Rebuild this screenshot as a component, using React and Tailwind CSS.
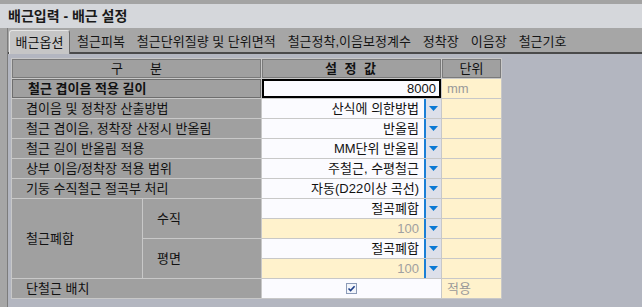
import React from "react";

const FONT = "font-['Liberation_Sans','Noto_Sans_CJK_KR',sans-serif]";

const tabs = ["철근피복", "철근단위질량 및 단위면적", "철근정착,이음보정계수", "정착장", "이음장", "철근기호"];

const DropBtn = () => (
  <div className="w-[17px] h-full shrink-0 border-l-2 border-[#1a7fd6] bg-[#dde0ea] flex items-center justify-center">
    <svg width="9" height="5" viewBox="0 0 9 5">
      <path d="M0 0H9L4.5 5Z" fill="#0a78d4" />
    </svg>
  </div>
);

const Label = ({ children, className = "" }) => (
  <div className={`bg-[#a0a0a0] flex items-center pl-[14px] text-[13px] leading-none text-[#111] ${className}`}>
    {children}
  </div>
);

const Select = ({ value, muted }) => (
  <div className={`flex items-stretch ${muted ? "bg-[#fff2cc]" : "bg-[#fbfbff]"}`}>
    <div className={`flex-1 flex items-center justify-end pr-[5px] text-[13px] leading-none ${muted ? "text-[#a0a0a0]" : "text-[#111]"}`}>
      {value}
    </div>
    <DropBtn />
  </div>
);

const Unit = ({ children }) => (
  <div className="bg-[#fff2cc] flex items-center pl-[5px] text-[13px] leading-none text-[#999]">{children}</div>
);

export default function App() {
  return (
    <div className={`${FONT} w-[642px] h-[307px] overflow-hidden bg-[#a6a6a6] flex flex-col`}>
      <div className="h-[4px] bg-[#a3a3a3]" />
      <div className="h-[24px] bg-[#d5d7db] flex items-center pl-[8px] text-[14px] font-bold text-[#1a1a1a] leading-none">
        배근입력 - 배근 설정
      </div>
      <div className="flex-1 flex">
        <div className="w-[8px] border-r border-[#7c7c7c] bg-[#a6a6a6]" />
        <div className="flex-1 flex flex-col">
          <div className="h-[26px] flex items-end border-b-2 border-[#4a4a4a] pl-[1px] text-[13px] leading-none text-[#151515]">
            <div className="relative -mb-[2px] h-[24px] w-[61px] bg-[#c6c6c6] border-t border-l border-[#e6e6e6] border-r border-r-[#6a6a6a] rounded-t-[3px] flex items-center justify-center">
              배근옵션
            </div>
            <div className="flex items-center h-[22px] gap-[12px] ml-[7px]">
              {tabs.map((t) => (
                <span key={t}>{t}</span>
              ))}
            </div>
          </div>
          <div className="flex-1 bg-[#b3b6c0] pl-[3px] pt-[2px]">
            <div className="inline-grid grid-cols-[130px_118px_179px_59px] grid-rows-[repeat(12,19px)] gap-px bg-[#c8c8c8] border border-[#c8c8c8]">
              <div className="col-span-2 bg-[#a0a0a0] border border-[#7a7a7a] flex items-center justify-center gap-[27px] text-[13px] leading-none text-[#111]">
                <span>구</span>
                <span>분</span>
              </div>
              <div className="bg-[#a0a0a0] border border-[#7a7a7a] flex items-center justify-center font-bold text-[13px] leading-none text-[#111] tracking-[2px]">
                설 정 값
              </div>
              <div className="bg-[#a0a0a0] border border-[#7a7a7a] flex items-center justify-center text-[13px] leading-none text-[#111]">
                단위
              </div>

              <Label className="col-span-2 font-bold border border-[#6e6e6e] pl-[15px]">철근 겹이음 적용 길이</Label>
              <div className="bg-[#fbfbff] border-2 border-black flex items-center justify-end pr-[3px] text-[13px] leading-none text-[#111]">
                8000
              </div>
              <Unit>mm</Unit>

              <Label className="col-span-2">겹이음 및 정착장 산출방법</Label>
              <Select value="산식에 의한방법" />
              <Unit />

              <Label className="col-span-2">철근 겹이음, 정착장 산정시 반올림</Label>
              <Select value="반올림" />
              <Unit />

              <Label className="col-span-2">철근 길이 반올림 적용</Label>
              <Select value="MM단위 반올림" />
              <Unit />

              <Label className="col-span-2">상부 이음/정착장 적용 범위</Label>
              <Select value="주철근, 수평철근" />
              <Unit />

              <Label className="col-span-2">기둥 수직철근 절곡부 처리</Label>
              <Select value="자동(D22이상 곡선)" />
              <Unit />

              <Label className="row-span-4">철근폐합</Label>
              <Label className="row-span-2 pl-[12px]">수직</Label>
              <Select value="절곡폐합" />
              <Unit />
              <Select value="100" muted />
              <Unit />
              <Label className="row-span-2 pl-[12px]">평면</Label>
              <Select value="절곡폐합" />
              <Unit />
              <Select value="100" muted />
              <Unit />

              <Label className="col-span-2">단철근 배치</Label>
              <div className="bg-[#fbfbff] flex items-center justify-center">
                <div className="w-[11px] h-[11px] border border-[#8c9bb8] bg-[#f2f5fb] flex items-center justify-center">
                  <svg width="9" height="9" viewBox="0 0 9 9">
                    <path d="M1.5 4.5L3.6 6.6L7.6 2.2" fill="none" stroke="#1f3f88" strokeWidth="1.6" />
                  </svg>
                </div>
              </div>
              <Unit>적용</Unit>
            </div>
          </div>
        </div>
      </div>
    </div>
  );
}
